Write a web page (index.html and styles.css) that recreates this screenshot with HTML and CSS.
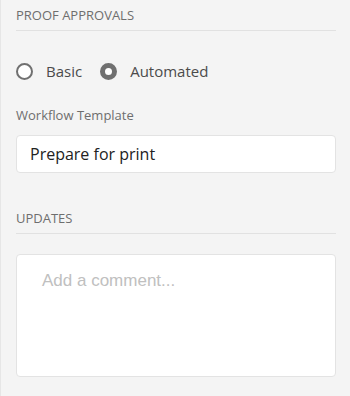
FILE: index.html
```html
<!DOCTYPE html>
<html>
<head>
<meta charset="utf-8">
<link rel="stylesheet" href="styles.css">
</head>
<body>
<div class="panel">
  <section class="section">
    <h2 class="heading">PROOF APPROVALS</h2>
    <div class="radios">
      <label class="radio"><span class="dot"></span><span class="rlabel">Basic</span></label>
      <label class="radio"><span class="dot checked"></span><span class="rlabel">Automated</span></label>
    </div>
    <div class="field-label">Workflow Template</div>
    <div class="input">Prepare for print</div>
  </section>
  <section class="section updates">
    <h2 class="heading">UPDATES</h2>
    <div class="textarea"><span class="placeholder">Add a comment...</span></div>
  </section>
</div>
</body>
</html>
```

FILE: styles.css
```css
html, body {
  margin: 0;
  padding: 0;
  background: #f4f4f4;
}
.panel {
  width: 350px;
  height: 396px;
  box-sizing: border-box;
  border-left: 1px solid #e6e6e6;
  background: #f4f4f4;
  padding: 0 14px 0 15px;
  font-family: "Open Sans", sans-serif;
  overflow: hidden;
}
.heading {
  margin: 0;
  font-size: 13px;
  font-weight: 400;
  color: #6e6e6e;
  line-height: 16px;
  border-bottom: 1px solid #e1e1e1;
  box-sizing: border-box;
  height: 31px;
  padding-top: 7px;
}
.radios {
  display: flex;
  align-items: center;
  gap: 18px;
  margin-top: 30px;
  height: 20px;
}
.radio {
  display: flex;
  align-items: center;
  gap: 13px;
}
.dot {
  width: 17px;
  height: 17px;
  box-sizing: border-box;
  border: 2px solid #707070;
  border-radius: 50%;
  background: #fff;
}
.dot.checked {
  border: 5px solid #707070;
}
.rlabel {
  font-size: 15px;
  color: #4b4b4b;
}
.field-label {
  margin-top: 26px;
  font-size: 13px;
  color: #6e6e6e;
  line-height: 16px;
}
.input {
  margin-top: 12px;
  height: 38px;
  box-sizing: border-box;
  background: #fff;
  border: 1px solid #e3e3e3;
  border-radius: 4px;
  padding: 0 13px;
  display: flex;
  align-items: center;
  font-size: 16px;
  color: #222;
}
.updates {
  margin-top: 30px;
}
.textarea {
  margin-top: 20px;
  height: 123px;
  box-sizing: border-box;
  background: #fff;
  border: 1px solid #e3e3e3;
  border-radius: 4px;
  padding: 14px 25px;
}
.placeholder {
  font-family: "Liberation Sans", Arial, sans-serif;
  font-size: 17px;
  color: #c0c0c0;
}
```
